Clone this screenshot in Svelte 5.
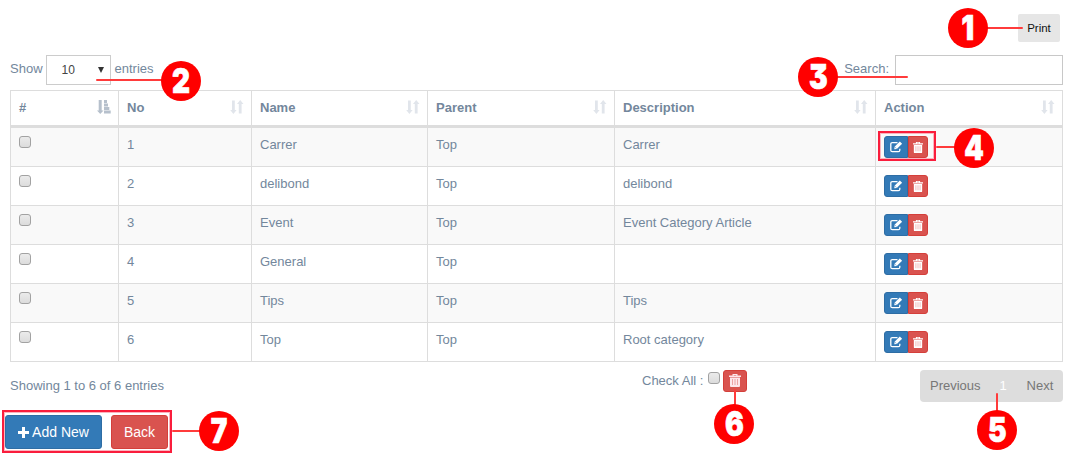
<script>
  const columns = ['#', 'No', 'Name', 'Parent', 'Description', 'Action'];
  const rows = [
    ['1', 'Carrer', 'Top', 'Carrer'],
    ['2', 'delibond', 'Top', 'delibond'],
    ['3', 'Event', 'Top', 'Event Category Article'],
    ['4', 'General', 'Top', ''],
    ['5', 'Tips', 'Top', 'Tips'],
    ['6', 'Top', 'Top', 'Root category']
  ];
  // Callout badges: centre of each circle, and its leader line
  const callouts = [
    { n: 1, x: 968, y: 28, lx: 986, ly: 27, w: 37, h: 2 },
    { n: 2, x: 181, y: 81, lx: 96, ly: 79, w: 67, h: 2 },
    { n: 3, x: 818, y: 77, lx: 836, ly: 76, w: 72, h: 2 },
    { n: 4, x: 974, y: 148, lx: 936, ly: 146, w: 20, h: 2 },
    { n: 5, x: 997, y: 430, lx: 996, ly: 393, w: 2, h: 19 },
    { n: 6, x: 734, y: 424, lx: 734, ly: 389, w: 2, h: 17 },
    { n: 7, x: 219, y: 431, lx: 172, ly: 430, w: 29, h: 2 }
  ];
</script>

{#snippet trash(w, h)}
  <svg width={w} height={h} viewBox="0 0 12 13" preserveAspectRatio="none" fill="currentColor">
    <path fill-rule="evenodd" d="M3.500 0h5v1.500H12V3H0V1.500h3.500zM4.700 1v.6h2.600V1zM1 3.600h10V12q0 1-1 1H2q-1 0-1-1z" />
    <path class="slots" d="M3.500 5v6M6 5v6M8.500 5v6" />
  </svg>
{/snippet}

<div class="page">
  <div class="top"><button class="print">Print</button></div>

  <div class="controls">
    <div class="length">
      Show
      <span class="select"><span>10</span><i></i></span>
      entries
    </div>
    <label class="search">Search: <input type="text" /></label>
  </div>

  <div class="table">
    <div class="row head">
      {#each columns as c, i}
        <div class="cell">
          <b>{c}</b>
          {#if i === 0}
            <svg class="sort on" width="14" height="14" viewBox="0 0 14 14" fill="currentColor">
              <path d="M1.700 0h3v10.500H6.500L3.250 14 0 10.500h1.700zM7 0h3v3H7zM7 3.500h4v3H7zM7 7h5.300v3H7zM7 10.500h6.700v3H7z" />
            </svg>
          {:else}
            <svg class="sort" width="14" height="14" viewBox="0 0 14 14" fill="currentColor">
              <path d="M2 .5h2.800V10H6.600L3.400 14 .2 10H2zM8.800 13.500h2.800V4h1.900L10.200 0 7 4h1.800z" />
            </svg>
          {/if}
        </div>
      {/each}
    </div>
    {#each rows as r, i}
      <div class="row" class:odd={i % 2 === 0}>
        <div class="cell"><span class="check"></span></div>
        {#each r as v}<div class="cell">{v}</div>{/each}
        <div class="cell">
          <div class="group">
            <button class="edit" aria-label="Edit">
              <svg width="13" height="12" viewBox="0 0 13 12" fill="none" stroke="currentColor">
                <path d="M7.500 1.700H2.300Q.8 1.700.8 3.200v6Q.8 10.700 2.300 10.700h6Q9.800 10.700 9.800 9.200V7.700" stroke-width="1.300" />
                <path d="M4.300 8.300l.3-2.500L9.800.5l2.300 2.200-5.300 5.300z" fill="currentColor" stroke="none" />
                <path d="M5.300 6.400l1 1" stroke="#337ab7" stroke-width=".8" />
              </svg>
            </button>
            <button class="del" aria-label="Delete">{@render trash(10, 11)}</button>
          </div>
        </div>
      </div>
    {/each}
  </div>

  <div class="foot">
    <div class="info">Showing 1 to 6 of 6 entries</div>
    <div class="all">Check All : <span class="check"></span><button class="del big" aria-label="Delete all">{@render trash(12, 13)}</button></div>
    <div class="pager"><span>Previous</span><span class="cur">1</span><span>Next</span></div>
  </div>

  <div class="actions">
    <button class="add">
      <svg width="11" height="11" viewBox="0 0 11 11"><path d="M5.500 0v11M0 5.500h11" stroke="#fff" stroke-width="3" /></svg>Add New
    </button>
    <button class="back">Back</button>
  </div>

  <div class="frame f-row"></div>
  <div class="frame f-actions"></div>
  {#each callouts as c}
    <div class="leader" style="left:{c.lx}px;top:{c.ly}px;width:{c.w}px;height:{c.h}px"></div>
    <div class="badge" style="left:{c.x - 20}px;top:{c.y - 20}px"><span>{c.n}</span></div>
  {/each}
</div>

<style>
  :global(body) { background: #fff; }
  .page {
    position: relative; box-sizing: border-box; width: 1074px; height: 455px;
    overflow: hidden; padding: 14px 11px 0 10px;
    font: 13px/18px "Liberation Sans", Arial, sans-serif; color: #73879c;
  }
  .page * { box-sizing: border-box; }
  button { font: inherit; color: #fff; border: 0; padding: 0; margin: 0; display: flex; align-items: center; justify-content: center; }
  svg { display: block; flex: none; }
  .top { display: flex; justify-content: flex-end; padding-right: 3px; }
  .print { width: 42px; height: 28px; border-radius: 2px; background: #e6e6e6; color: #111; font-size: 11.500px; }
  .controls { display: flex; justify-content: space-between; margin-top: 13px; height: 30px; }
  .length, .search { display: flex; align-items: center; height: 28px; }
  .select {
    display: flex; align-items: center; justify-content: space-between; width: 65px; height: 30px;
    margin: 2px 4px 0 3px; padding: 0 6px 0 15px; border: 1px solid #ccc; background: #fff; color: #444; font-size: 12px;
  }
  .select i { border: 3px solid transparent; border-top: 6px solid #333; border-bottom: 0; }
  .search input { width: 168px; height: 30px; margin: 2px 0 0 6px; padding: 0 8px; border: 1px solid #c8c8c8; background: #fff; }
  .table { margin-top: 5px; border-top: 1px solid #ddd; border-right: 1px solid #ddd; }
  .row { display: grid; grid-template-columns: 108px 133px 176px 187px 261px 187px; height: 39px; border-bottom: 1px solid #ddd; }
  .row.odd { background: #f9f9f9; }
  .row.head { height: 37px; border-bottom: 3px solid #ddd; }
  .cell { border-left: 1px solid #ddd; padding: 8px; }
  .head .cell { display: flex; justify-content: space-between; padding: 8px 7px 0 8px; }
  .sort { margin-top: 1px; color: #e1e5eb; }
  .sort.on { color: #b6c0cc; }
  .check {
    display: block; width: 12px; height: 12px; border: 1px solid #a2a2a2; border-radius: 3px;
    background: linear-gradient(#ebebeb, #dcdcdc);
  }
  .group { display: flex; }
  .edit, .del { height: 22px; border: 1px solid #2e6da4; background: #337ab7; }
  .edit { width: 24px; border-radius: 3px 0 0 3px; }
  .del { width: 20px; border-color: #d43f3a; background: #d9534f; border-radius: 0 3px 3px 0; }
  .slots { stroke: #d9534f; stroke-width: .9; opacity: .5; }
  .big { width: 24px; border-radius: 3px; color: #fde6ec; margin-left: 3px; padding-bottom: 2px; }
  .foot { display: flex; height: 40px; padding-top: 8px; }
  .info { width: 632px; padding-top: 7px; }
  .all { display: flex; width: 278px; line-height: 21px; white-space: pre; }
  .all .check { margin: 2px 0 0 1px; }
  .pager { display: flex; width: 143px; height: 32px; border-radius: 4px; background: #ddd; color: #777; line-height: 31px; padding-left: 10px; }
  .cur { color: #fff; width: 7px; margin: 0 20px 0 19px; }
  .actions { display: flex; gap: 9px; margin: 13px 0 0 -5px; font-size: 14px; }
  .add, .back { height: 34px; border-radius: 3px; }
  .add { width: 97px; gap: 3px; border: 1px solid #2e6da4; background: #337ab7; }
  .back { width: 57px; border: 1px solid #d43f3a; background: #d9534f; }
  .frame { position: absolute; border: 2px solid #fa1d3c; box-shadow: inset 0 0 0 1px #fbb4be; }
  .f-row { left: 878px; top: 131px; width: 58px; height: 30px; }
  .f-actions { left: 2px; top: 410px; width: 170px; height: 43px; }
  .leader { position: absolute; background: #ff3b3b; border-radius: 1px; }
  .badge {
    position: absolute; width: 40px; height: 40px; border-radius: 50%; background: #f00; color: #fff;
    text-align: center; font: 900 34px/40px Inter, sans-serif; font-feature-settings: "cv09";
  }
  .badge span { display: inline-block; transform: scaleX(.82); -webkit-text-stroke: .7px #fff; }
</style>
